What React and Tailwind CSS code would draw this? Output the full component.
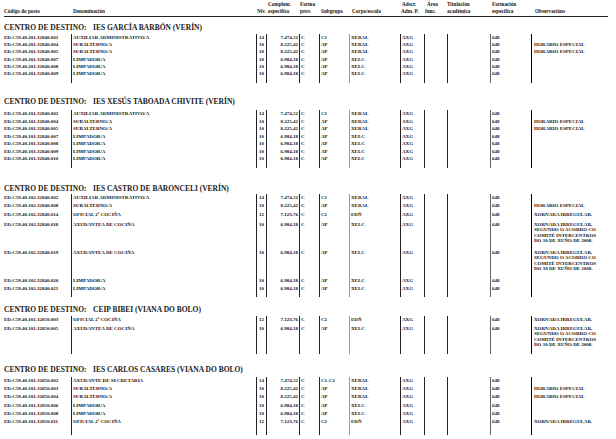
import React from 'react';

const COLS = 'grid grid-cols-[67px_185px_10px_33px_20px_30px_51px_24px_23px_43px_41px_1fr]';

const HE = 'HORARIO ESPECIAL';
const XI = 'XORNADA IRREGULAR.';
const XL = ['XORNADA IRREGULAR,', 'SEGUNDO O ACORDO CO', 'COMITÉ INTERCENTROS', 'DO 10 DE XUÑO DE 2008.'];

const aux = ['AUXILIAR ADMINISTRATIVO/A', '14', '7.474,52', 'C', 'C1', 'XERAL'];
const sec = ['AXUDANTE DE SECRETARÍA', '14', '7.474,52', 'C', 'C1-C2', 'XERAL'];
const sub = ['SUBALTERNO/A', '10', '8.225,42', 'C', 'AP', 'XERAL'];
const lim = ['LIMPADOR/A', '10', '6.984,18', 'C', 'AP', 'XELC'];
const ofi = ['OFICIAL 2ª COCIÑA', '12', '7.123,76', 'C', 'C2', 'EDÑ'];
const axu = ['AXUDANTEA DE COCIÑA', '10', '6.984,18', 'C', 'AP', 'XELC'];

const sections = [
  {
    name: 'IES GARCÍA BARBÓN (VERÍN)',
    mt: 'mt-[7px]', gap: 'mt-[1.8px]', tail: 'h-[5px]',
    rows: [
      { code: 'ED.C59.40.201.32840.001', d: aux, obs: '', h: 'h-[7.3px]' },
      { code: 'ED.C59.40.201.32840.004', d: sub, obs: HE, h: 'h-[7.3px]' },
      { code: 'ED.C59.40.201.32840.005', d: sub, obs: HE, h: 'h-[7.3px]' },
      { code: 'ED.C59.40.201.32840.007', d: lim, obs: '', h: 'h-[7.3px]' },
      { code: 'ED.C59.40.201.32840.008', d: lim, obs: '', h: 'h-[7.3px]' },
      { code: 'ED.C59.40.201.32840.009', d: lim, obs: '', h: 'h-[7.3px]' },
    ],
  },
  {
    name: 'IES XESÚS TABOADA CHIVITE (VERÍN)',
    mt: 'mt-[15.9px]', gap: 'mt-[3.8px]', tail: 'h-[5px]',
    rows: [
      { code: 'ED.C59.40.101.32840.002', d: aux, obs: '', h: 'h-[7.5px]' },
      { code: 'ED.C59.40.101.32840.004', d: sub, obs: HE, h: 'h-[7.5px]' },
      { code: 'ED.C59.40.101.32840.005', d: sub, obs: HE, h: 'h-[7.5px]' },
      { code: 'ED.C59.40.101.32840.007', d: lim, obs: '', h: 'h-[7.5px]' },
      { code: 'ED.C59.40.101.32840.008', d: lim, obs: '', h: 'h-[7.5px]' },
      { code: 'ED.C59.40.101.32840.009', d: lim, obs: '', h: 'h-[7.5px]' },
      { code: 'ED.C59.40.101.32840.010', d: lim, obs: '', h: 'h-[7.5px]' },
    ],
  },
  {
    name: 'IES CASTRO DE BARONCELI (VERÍN)',
    mt: 'mt-[17.2px]', gap: 'mt-[1.3px]', tail: 'h-[5px]',
    rows: [
      { code: 'ED.C59.40.102.32840.002', d: aux, obs: '', h: 'h-[7.5px]' },
      { code: 'ED.C59.40.102.32840.008', d: sub, obs: HE, h: 'h-[9.5px]' },
      { code: 'ED.C59.40.102.32840.014', d: ofi, obs: XI, h: 'h-[9.5px]' },
      { code: 'ED.C59.40.102.32840.018', d: axu, obs: XL, h: 'h-[28px]' },
      { code: 'ED.C59.40.102.32840.019', d: axu, obs: XL, h: 'h-[27.8px]' },
      { code: 'ED.C59.40.102.32840.020', d: lim, obs: '', h: 'h-[8px]' },
      { code: 'ED.C59.40.102.32840.021', d: lim, obs: '', h: 'h-[7.4px]' },
    ],
  },
  {
    name: 'CEIP BIBEI (VIANA DO BOLO)',
    mt: 'mt-[9px]', gap: 'mt-[1.8px]', tail: 'h-0',
    rows: [
      { code: 'ED.C59.40.101.32850.003', d: ofi, obs: XI, h: 'h-[9px]' },
      { code: 'ED.C59.40.101.32850.005', d: axu, obs: XL, h: 'h-[29.2px]' },
    ],
  },
  {
    name: 'IES CARLOS CASARES (VIANA DO BOLO)',
    mt: 'mt-[12.5px]', gap: 'mt-[2.3px]', tail: 'h-[8px]',
    rows: [
      { code: 'ED.C59.40.101.32850.002', d: sec, obs: '', h: 'h-[8.3px]' },
      { code: 'ED.C59.40.101.32850.003', d: sub, obs: HE, h: 'h-[8.3px]' },
      { code: 'ED.C59.40.101.32850.004', d: sub, obs: HE, h: 'h-[8.3px]' },
      { code: 'ED.C59.40.101.32850.006', d: lim, obs: '', h: 'h-[8.3px]' },
      { code: 'ED.C59.40.101.32850.008', d: lim, obs: '', h: 'h-[8.3px]' },
      { code: 'ED.C59.40.101.32850.011', d: ofi, obs: XI, h: 'h-[8.3px]' },
    ],
  },
];

function Row({ code, d, obs, h }) {
  const [den, niv, comp, forma, subg, corpo] = d || ['', '', '', '', '', ''];
  return (
    <div className={`${COLS} ${h} text-[5px] leading-[7.4px] font-bold text-[#141414]`}>
      <div className="whitespace-nowrap">{code}</div>
      <div className="border-l border-[#222] pl-[1px] whitespace-nowrap">{den}</div>
      <div className="border-l border-[#222] text-center">{niv}</div>
      <div className="border-l border-[#222] text-right pr-[1px] whitespace-nowrap">{comp}</div>
      <div className="border-l border-[#222] pl-[1px]">{forma}</div>
      <div className="border-l border-[#222] pl-[1px] whitespace-nowrap">{subg}</div>
      <div className="border-l border-[#9a9a9a] pl-[1px]">{corpo}</div>
      <div className="border-l border-[#222] pl-[1px]">{d ? 'AXG' : ''}</div>
      <div className="border-l border-[#222]"></div>
      <div className="border-l border-[#222]"></div>
      <div className="border-l border-[#666] pl-[1px]">{d ? '648' : ''}</div>
      <div className="border-l border-black pl-[2px] whitespace-nowrap">
        {Array.isArray(obs) ? (
          <div className="pt-[1.2px] leading-[5.3px]">
            {obs.map(l => <div key={l}>{l}</div>)}
          </div>
        ) : obs}
      </div>
    </div>
  );
}

export default function App() {
  return (
    <div className="w-[616px] h-[439px] overflow-hidden bg-white font-['Liberation_Serif',serif] text-[#141414]">
      <div className="ml-[4px] w-[604px]">
        <div className={`${COLS} h-[15px] border-b border-[#222] text-[5.2px] leading-[7px] font-bold pt-[1px] box-content`}>
          <div className="pt-[7px]">Código do posto</div>
          <div className="pt-[7px] pl-[2px]">Denominación</div>
          <div className="col-span-2 whitespace-nowrap pl-[1px]">
            <div className="pl-[11px]">Complem.</div>
            <div>Niv. <span className="pl-[1px]">específico</span></div>
          </div>
          <div className="pl-[1px]">
            <div>Forma</div>
            <div>prov.</div>
          </div>
          <div className="pt-[7px] pl-[2px]">Subgrupo</div>
          <div className="pt-[7px] pl-[3px]">Corpo/escala</div>
          <div className="pl-[1px] whitespace-nowrap">
            <div className="pl-[1px]">Adscr.</div>
            <div>Adm. P.</div>
          </div>
          <div className="pl-[1px]">
            <div className="pl-[2px]">Área</div>
            <div>func.</div>
          </div>
          <div>
            <div>Titulación</div>
            <div>académica</div>
          </div>
          <div className="pl-[2px]">
            <div>Formación</div>
            <div>específica</div>
          </div>
          <div className="pt-[7px] pl-[4px]">Observacións</div>
        </div>

        {sections.map(s => (
          <div key={s.name}>
            <div className={`${s.mt} flex h-[8px] text-[7.5px] leading-[8px] font-bold whitespace-nowrap text-[#1a1a1a]`}>
              <span className="w-[89px]">CENTRO DE DESTINO:</span>
              <span>{s.name}</span>
            </div>
            <div className={s.gap}>
              {s.rows.map(r => <Row key={r.code} {...r} />)}
              <Row code="" d={null} obs="" h={s.tail} />
            </div>
          </div>
        ))}
      </div>
    </div>
  );
}
